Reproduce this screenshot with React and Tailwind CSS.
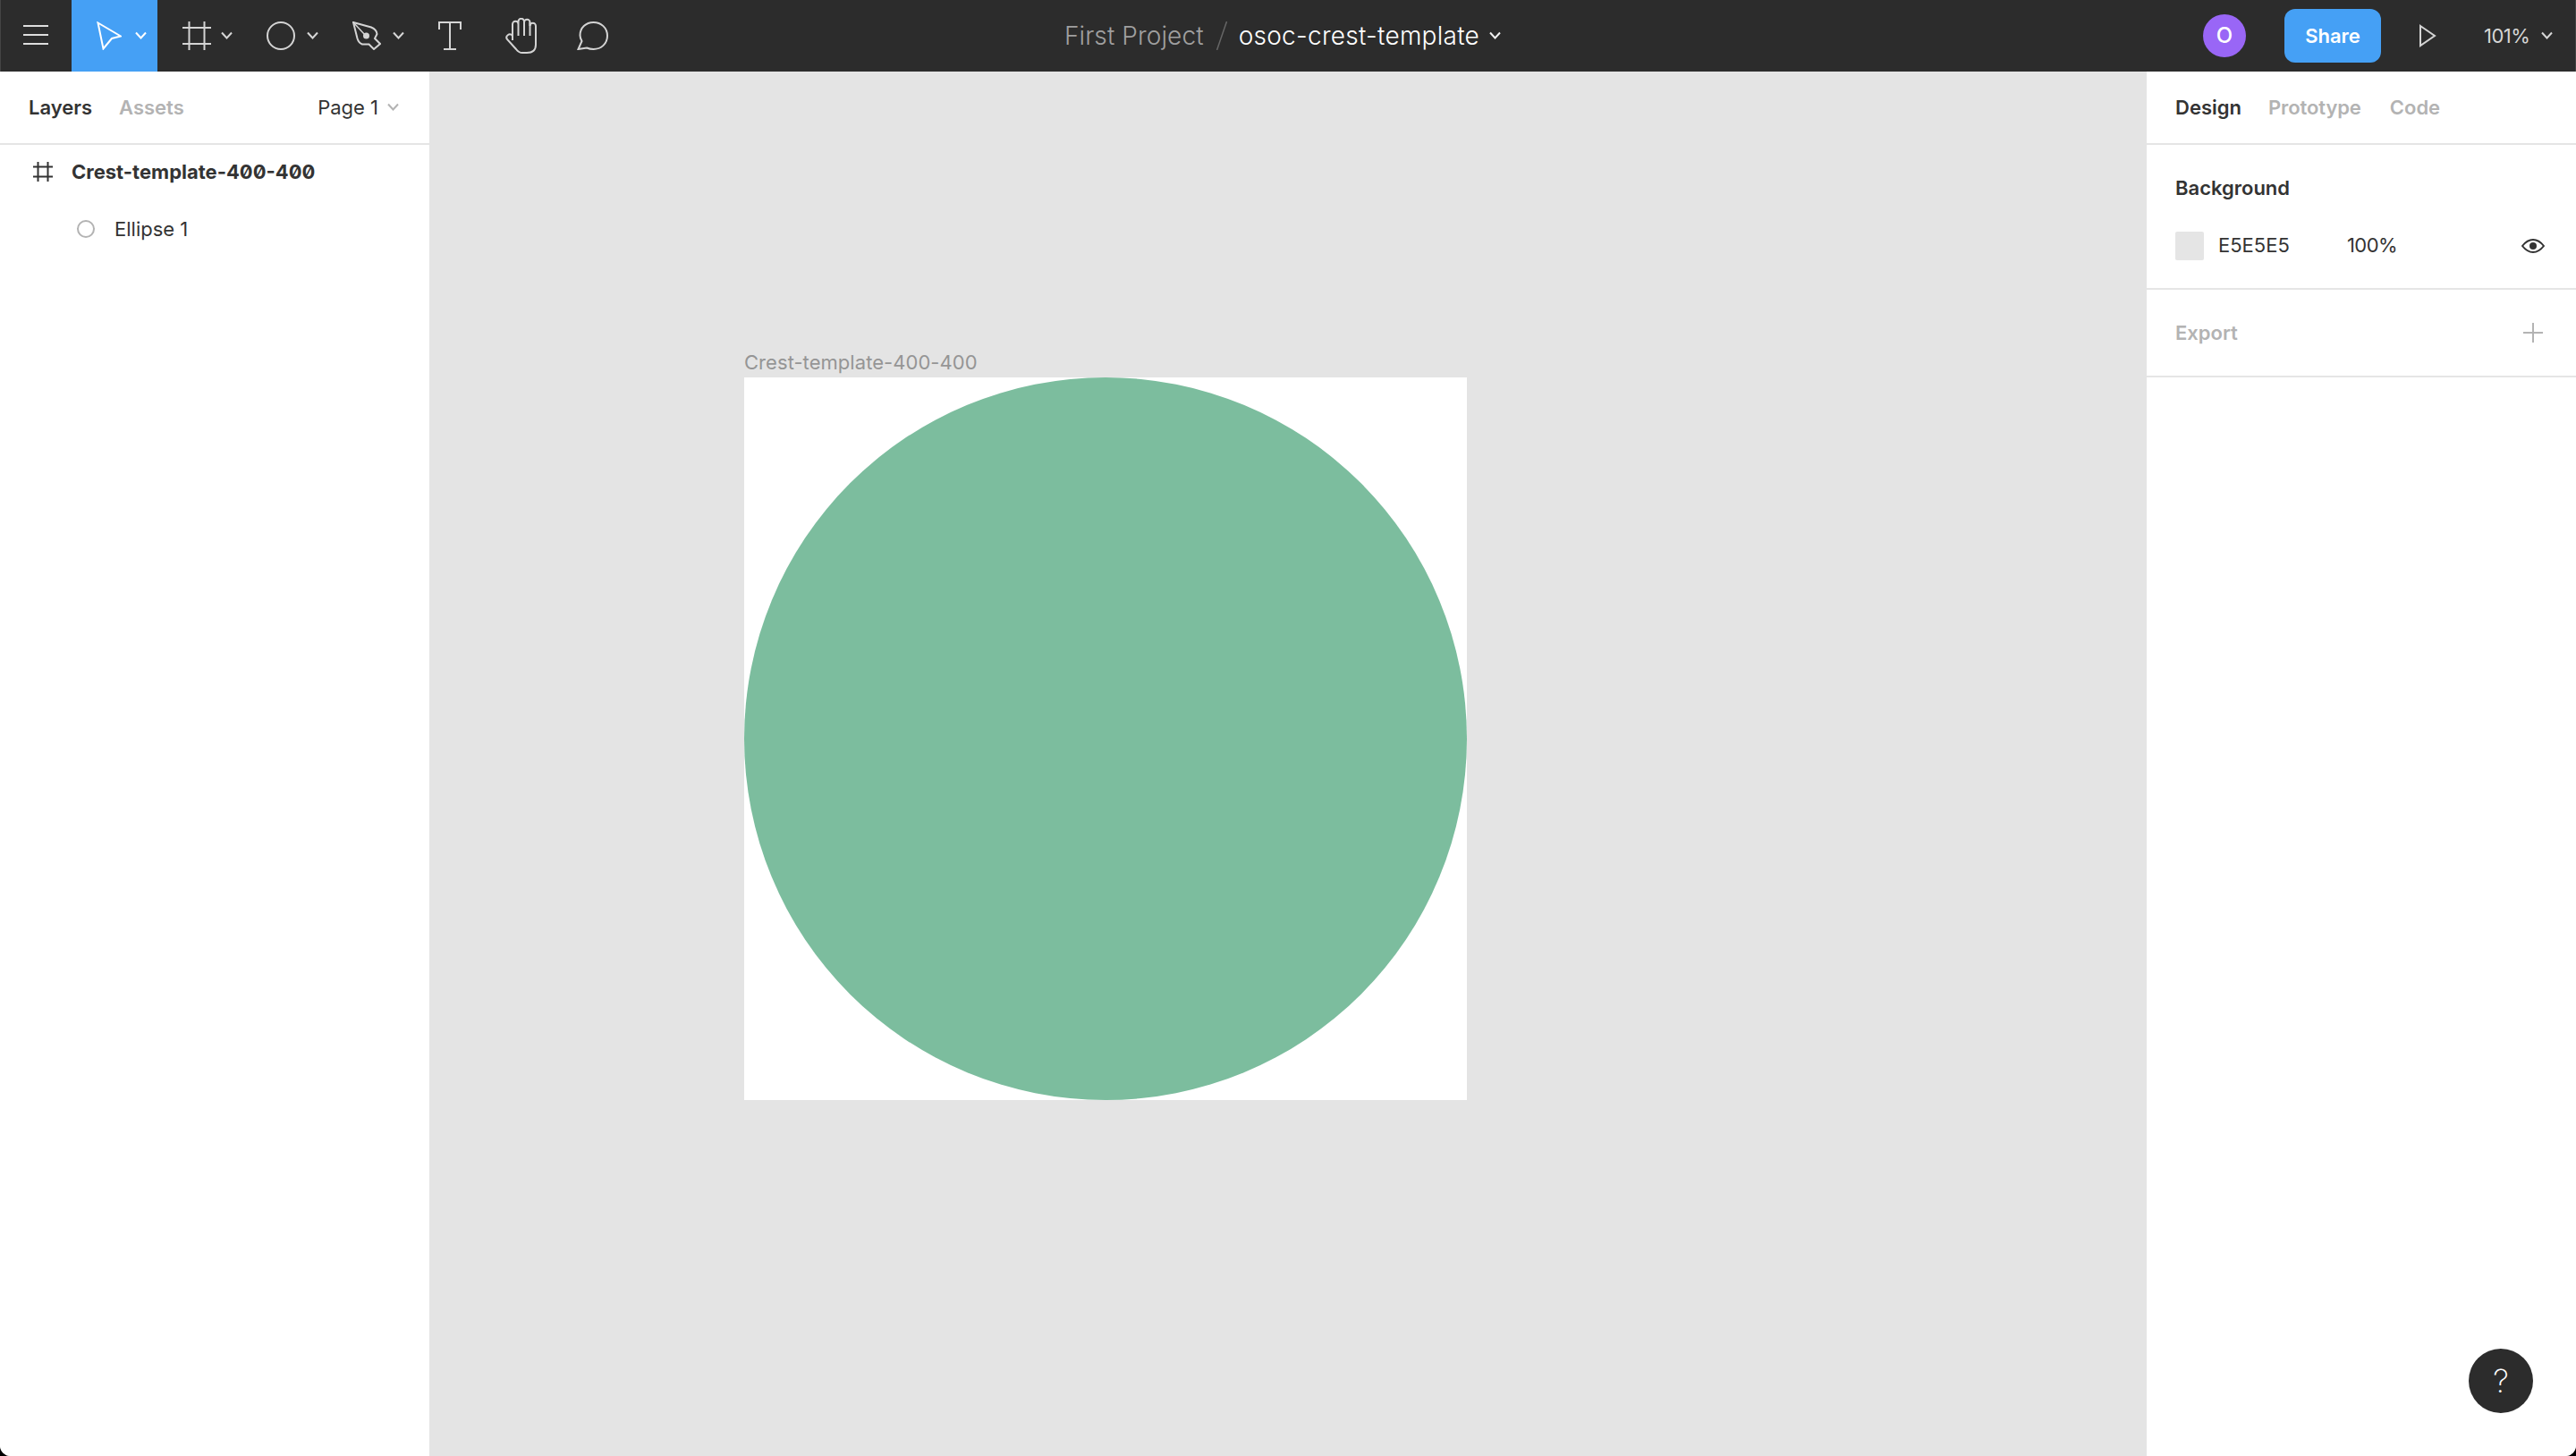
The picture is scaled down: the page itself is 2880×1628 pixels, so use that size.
import React from "react";

const Chev = ({ className = "", color = "#d6d6d6" }) => (
  <svg width="13" height="12" viewBox="0 0 13 12" className={className} fill="none">
    <path d="M1 2.5 L6.5 8.5 L12 2.5" stroke={color} strokeWidth="2" />
  </svg>
);

const ic = "#d4d4d4";

export default function App() {
  return (
    <div className="h-[1628px] w-[2880px] bg-black">
      <div className="flex h-[1628px] w-[2880px] flex-col overflow-hidden rounded-b-[12px] bg-white font-['Inter',sans-serif] text-[#333]">
        <header className="relative flex h-[80px] shrink-0 items-center bg-[#2c2c2c] shadow-[inset_1px_0_0_#444,inset_-1px_0_0_#444]">
          <div className="flex h-[80px] w-[80px] shrink-0 items-center justify-center">
            <svg width="28" height="24" viewBox="0 0 28 24" fill="none">
              <path d="M0 1h28M0 11h28M0 21h28" stroke="#dedede" strokeWidth="2" />
            </svg>
          </div>
          <div className="flex h-[80px] w-[96px] shrink-0 items-center bg-[#45a0f5] pl-[28px]">
            <svg width="28" height="32" viewBox="0 0 28 32" fill="none">
              <path d="M1.5 1.5 L27 16.5 L17 19 L7.5 30.5 Z" stroke="#fff" strokeWidth="2" />
            </svg>
            <Chev color="#fff" className="ml-[15px]" />
          </div>
          <div className="flex h-[80px] items-center">
            <svg width="32" height="32" viewBox="0 0 32 32" fill="none" className="ml-[28px]">
              <path d="M7.5 0v32M24.5 0v32M0 7h32M0 25h32" stroke={ic} strokeWidth="2" />
            </svg>
            <Chev className="ml-[11px]" />
            <svg width="32" height="32" viewBox="0 0 32 32" fill="none" className="ml-[38px]">
              <circle cx="16" cy="16" r="15" stroke={ic} strokeWidth="2" />
            </svg>
            <Chev className="ml-[13px]" />
            <svg width="32" height="32" viewBox="0 0 32 32" fill="none" className="ml-[38px]">
              <path d="M1 1 L21 6.5 Q27 9 27.5 14 L25 19 L31 25 L24 31 L18.5 25.5 H11 Q7 24 5.5 19 Z" stroke={ic} strokeWidth="2" />
              <path d="M1 1 L14 15" stroke={ic} strokeWidth="1.5" />
              <circle cx="15.5" cy="16" r="3.5" fill={ic} />
            </svg>
            <Chev className="ml-[13px]" />
            <svg width="26" height="32" viewBox="0 0 26 32" fill="none" className="ml-[38px]">
              <path d="M1 9V1h24v8M13 1v30M6 31h14" stroke={ic} strokeWidth="2" />
            </svg>
            <svg width="36" height="40" viewBox="0 0 36 40" fill="none" className="ml-[49px]">
              <path d="M8 25V7a3.25 3.25 0 0 1 6.5 0V4a3.25 3.25 0 0 1 6.5 0V5a3.25 3.25 0 0 1 6.5 0V9a3.25 3.25 0 0 1 6.5 0V30Q34 39 24 39H19Q15 39 12 35L2 24Q0 21 3 19Q5.5 17 8 20" stroke={ic} strokeWidth="2" />
              <path d="M14.5 7V20M21 4V20M27.5 5V20" stroke={ic} strokeWidth="2" />
            </svg>
            <svg width="36" height="32" viewBox="0 0 36 32" fill="none" className="ml-[44px]">
              <path d="M1.5 31L5.5 22Q3.5 18.5 3.5 15.5C3.5 7 10 1 18.5 1C27 1 34 7 34 16C34 25 27 31 18.5 31Q14.5 31 11 29.5Z" stroke={ic} strokeWidth="2" />
            </svg>
          </div>

          <div className="absolute left-[1190px] top-0 flex h-[80px] items-center text-[28px] font-light">
            <span className="tracking-[0.1px] text-[#a0a0a0]">First Project</span>
            <svg width="14" height="32" viewBox="0 0 14 32" fill="none" className="ml-[13px]">
              <path d="M12.5 0 L1.5 32" stroke="#666" strokeWidth="1.5" />
            </svg>
            <span className="ml-[12px] tracking-[0.27px] text-white">osoc-crest-template</span>
            <Chev color="#f0f0f0" className="ml-[11px]" />
          </div>

          <div className="ml-auto flex items-center">
            <div className="flex h-[48px] w-[48px] items-center justify-center rounded-full bg-[#9966f6] text-[24px] font-medium text-white">O</div>
            <button className="ml-[43px] flex h-[60px] w-[108px] items-center justify-center rounded-[12px] bg-[#45a0f5] text-[22px] font-semibold text-white">Share</button>
            <svg width="20" height="26" viewBox="0 0 20 26" fill="none" className="ml-[42px]">
              <path d="M2 2 L18 13 L2 24 Z" stroke={ic} strokeWidth="2" />
            </svg>
            <span className="ml-[53px] w-[50px] whitespace-nowrap text-[22px] tracking-[-0.5px] text-[#d6d6d6]">101%</span>
            <Chev className="ml-[14px] mr-[26px]" />
          </div>
        </header>

        <div className="flex min-h-0 flex-1">
          <aside className="flex w-[480px] shrink-0 flex-col bg-white">
            <div className="flex h-[82px] shrink-0 items-center border-b-2 border-[#e5e5e5] pl-[32px] pr-[34px] text-[22px]">
              <span className="font-semibold text-[#333]">Layers</span>
              <span className="ml-[30px] font-semibold text-[#b3b3b3]">Assets</span>
              <span className="ml-auto text-[#333]">Page 1</span>
              <Chev color="#b3b3b3" className="ml-[10px]" />
            </div>
            <div className="flex h-[60px] shrink-0 items-center pl-[37px] text-[22px]">
              <svg width="22" height="22" viewBox="0 0 22 22" fill="none">
                <path d="M5.5 0v22M16.5 0v22M0 5.5h22M0 16.5h22" stroke="#333" strokeWidth="2" />
              </svg>
              <span className="ml-[21px] font-bold text-[#333] slashed-zero">Crest-template-400-400</span>
            </div>
            <div className="mt-[2px] flex h-[64px] shrink-0 items-center pl-[86px] text-[22px] text-[#333]">
              <span className="h-[20px] w-[20px] rounded-full border-2 border-[#b3b3b3]" />
              <span className="ml-[22px]">Ellipse 1</span>
            </div>
          </aside>

          <main className="min-w-0 flex-1 bg-[#e4e4e4] pl-[352px] pt-[312px]">
            <div className="mb-[3px] h-[27px] text-[22px] leading-[27px] tracking-[0.05px] text-[#959595]">Crest-template-400-400</div>
            <div className="h-[808px] w-[808px] bg-white">
              <div className="h-full w-full rounded-full bg-[#7cbd9e]" />
            </div>
          </main>

          <aside className="relative flex w-[480px] shrink-0 flex-col bg-white">
            <div className="flex h-[82px] shrink-0 items-center border-b-2 border-[#e5e5e5] pl-[32px] text-[22px] font-semibold">
              <span className="text-[#333]">Design</span>
              <span className="ml-[30px] tracking-[-0.1px] text-[#b3b3b3]">Prototype</span>
              <span className="ml-[32px] text-[#b3b3b3]">Code</span>
            </div>
            <div className="flex h-[162px] shrink-0 flex-col border-b-2 border-[#e5e5e5] pl-[32px] pr-[35px]">
              <div className="mt-[34px] h-[28px] text-[22px] font-semibold leading-[28px] text-[#333]">Background</div>
              <div className="mt-[34px] flex items-center text-[22px] text-[#333]">
                <span className="h-[32px] w-[32px] rounded-[2px] bg-[#e5e5e5]" />
                <span className="ml-[16px] w-[144px]">E5E5E5</span>
                <span className="tracking-[-0.6px]">100%</span>
                <svg width="26" height="16" viewBox="0 0 26 16" fill="none" className="ml-auto">
                  <path d="M1 8 Q6.5 1 13 1 Q19.5 1 25 8 Q19.5 15 13 15 Q6.5 15 1 8 Z" stroke="#333" strokeWidth="2" />
                  <circle cx="13" cy="8" r="4" fill="#333" />
                </svg>
              </div>
            </div>
            <div className="flex h-[98px] shrink-0 items-center border-b-2 border-[#e5e5e5] pl-[32px] pr-[37px] text-[22px] font-semibold text-[#b3b3b3]">
              <span>Export</span>
              <svg width="22" height="22" viewBox="0 0 22 22" fill="none" className="ml-auto">
                <path d="M11 0v22M0 11h22" stroke="#b3b3b3" strokeWidth="2" />
              </svg>
            </div>
            <div className="absolute bottom-[48px] right-[48px] flex h-[72px] w-[72px] items-center justify-center rounded-full bg-[#2c2c2c] text-[36px] font-extralight text-white">?</div>
          </aside>
        </div>
      </div>
    </div>
  );
}
